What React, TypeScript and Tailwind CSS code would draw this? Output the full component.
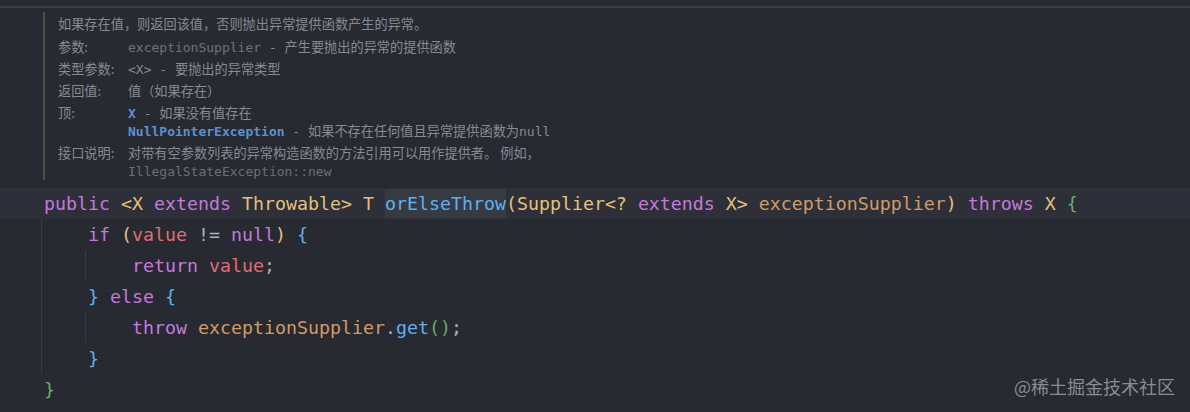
import React from "react";

const M = ({ children, c = "" }: { children: React.ReactNode; c?: string }) => (
  <span className={`font-['DejaVu_Sans_Mono',monospace] text-[13px] ${c}`}>{children}</span>
);

const K = ({ children }: { children: React.ReactNode }) => <span className="text-[#c678dd]">{children}</span>;
const Y = ({ children }: { children: React.ReactNode }) => <span className="text-[#e5c07b]">{children}</span>;
const O = ({ children }: { children: React.ReactNode }) => <span className="text-[#d19a66]">{children}</span>;
const B = ({ children }: { children: React.ReactNode }) => <span className="text-[#61afef]">{children}</span>;
const G = ({ children }: { children: React.ReactNode }) => <span className="text-[#6aab6e]">{children}</span>;
const R = ({ children }: { children: React.ReactNode }) => <span className="text-[#e06c75]">{children}</span>;
const W = ({ children }: { children: React.ReactNode }) => <span className="text-[#abb2bf]">{children}</span>;

function Line({
  depth,
  highlight,
  children,
}: {
  depth: number;
  highlight?: boolean;
  children: React.ReactNode;
}) {
  return (
    <div className={`flex h-[31px] items-stretch ${highlight ? "bg-[#2d3038]" : ""}`}>
      {depth === 0 ? (
        <div className="w-[44px] shrink-0" />
      ) : (
        <>
          <div className="w-[41px] shrink-0" />
          {depth === 2 && <div className="w-[44px] shrink-0 border-l border-[#393c43]" />}
          <div className="w-[47px] shrink-0 border-l border-[#393c43]" />
        </>
      )}
      <div className="whitespace-pre font-['DejaVu_Sans_Mono',monospace] text-[18.27px] leading-[31px] text-[#abb2bf]">
        {children}
      </div>
    </div>
  );
}

const Dash = () => <M>{" - "}</M>;

export default function App() {
  return (
    <div className="relative h-[412px] w-[1190px] overflow-hidden bg-[#282a31]">
      <div className="h-[6px]" />
      <div className="h-[2px] bg-[#3a3d44]" />
      <div className="pl-[43px] pt-[4px]">
        <div className="border-l-2 border-[#4a5046] pl-[13px] pt-[3px] font-['Noto_Sans_CJK_SC',sans-serif] text-[13.2px] leading-[18px] text-[#868a92]">
          <div className="h-[18px] whitespace-pre">如果存在值，则返回该值，否则抛出异常提供函数产生的异常。</div>
          <div className="mt-[5px] grid grid-cols-[70px_1fr] gap-y-[4px] whitespace-pre">
            <div className="h-[18px]">参数:</div>
            <div className="h-[18px]">
              <M c="text-[#6f747c]">exceptionSupplier</M>
              <Dash />
              产生要抛出的异常的提供函数
            </div>
            <div className="h-[18px]">类型参数:</div>
            <div className="h-[18px]">
              <M c="text-[#868a92]">&lt;X&gt;</M>
              <Dash />
              要抛出的异常类型
            </div>
            <div className="h-[18px]">返回值:</div>
            <div className="h-[18px]">值（如果存在）</div>
            <div className="h-[18px]">顶:</div>
            <div>
              <div className="h-[18px]">
                <M c="text-[#5d8fd1] font-bold">X</M>
                <Dash />
                如果没有值存在
              </div>
              <div className="h-[18px]">
                <M c="text-[#5d8fd1] font-bold">NullPointerException</M>
                <Dash />
                如果不存在任何值且异常提供函数为
                <M c="text-[#868a92]">null</M>
              </div>
            </div>
            <div className="h-[18px]">接口说明:</div>
            <div>
              <div className="h-[18px]">对带有空参数列表的异常构造函数的方法引用可以用作提供者。 例如，</div>
              <div className="h-[18px]">
                <M c="text-[#6a6f77]">IllegalStateException::new</M>
              </div>
            </div>
          </div>
        </div>
      </div>

      <div className="mt-[8px]">
        <Line depth={0} highlight>
          <K>public</K> <Y>&lt;X</Y> <K>extends</K> <Y>Throwable&gt;</Y> <Y>T</Y>{" "}
          <span className="inline-block bg-[#363a43] leading-[29px] text-[#61afef]">orElseThrow</span>
          <Y>(Supplier&lt;?</Y> <K>extends</K> <Y>X&gt;</Y> <O>exceptionSupplier</O>
          <Y>)</Y> <K>throws</K> <Y>X</Y> <G>{"{"}</G>
        </Line>
        <Line depth={1}>
          <K>if</K> <Y>(</Y>
          <R>value</R> <W>!=</W> <K>null</K>
          <Y>)</Y> <B>{"{"}</B>
        </Line>
        <Line depth={2}>
          <K>return</K> <R>value</R>
          <W>;</W>
        </Line>
        <Line depth={1}>
          <B>{"}"}</B> <K>else</K> <B>{"{"}</B>
        </Line>
        <Line depth={2}>
          <K>throw</K> <O>exceptionSupplier</O>
          <W>.</W>
          <B>get</B>
          <G>()</G>
          <W>;</W>
        </Line>
        <Line depth={1}>
          <B>{"}"}</B>
        </Line>
        <Line depth={0}>
          <G>{"}"}</G>
        </Line>
      </div>

      <div className="absolute bottom-[13px] right-[15px] font-['Noto_Sans_CJK_SC',sans-serif] text-[18px] leading-[26px] text-[#8a8c92]">
        @稀土掘金技术社区
      </div>
    </div>
  );
}
